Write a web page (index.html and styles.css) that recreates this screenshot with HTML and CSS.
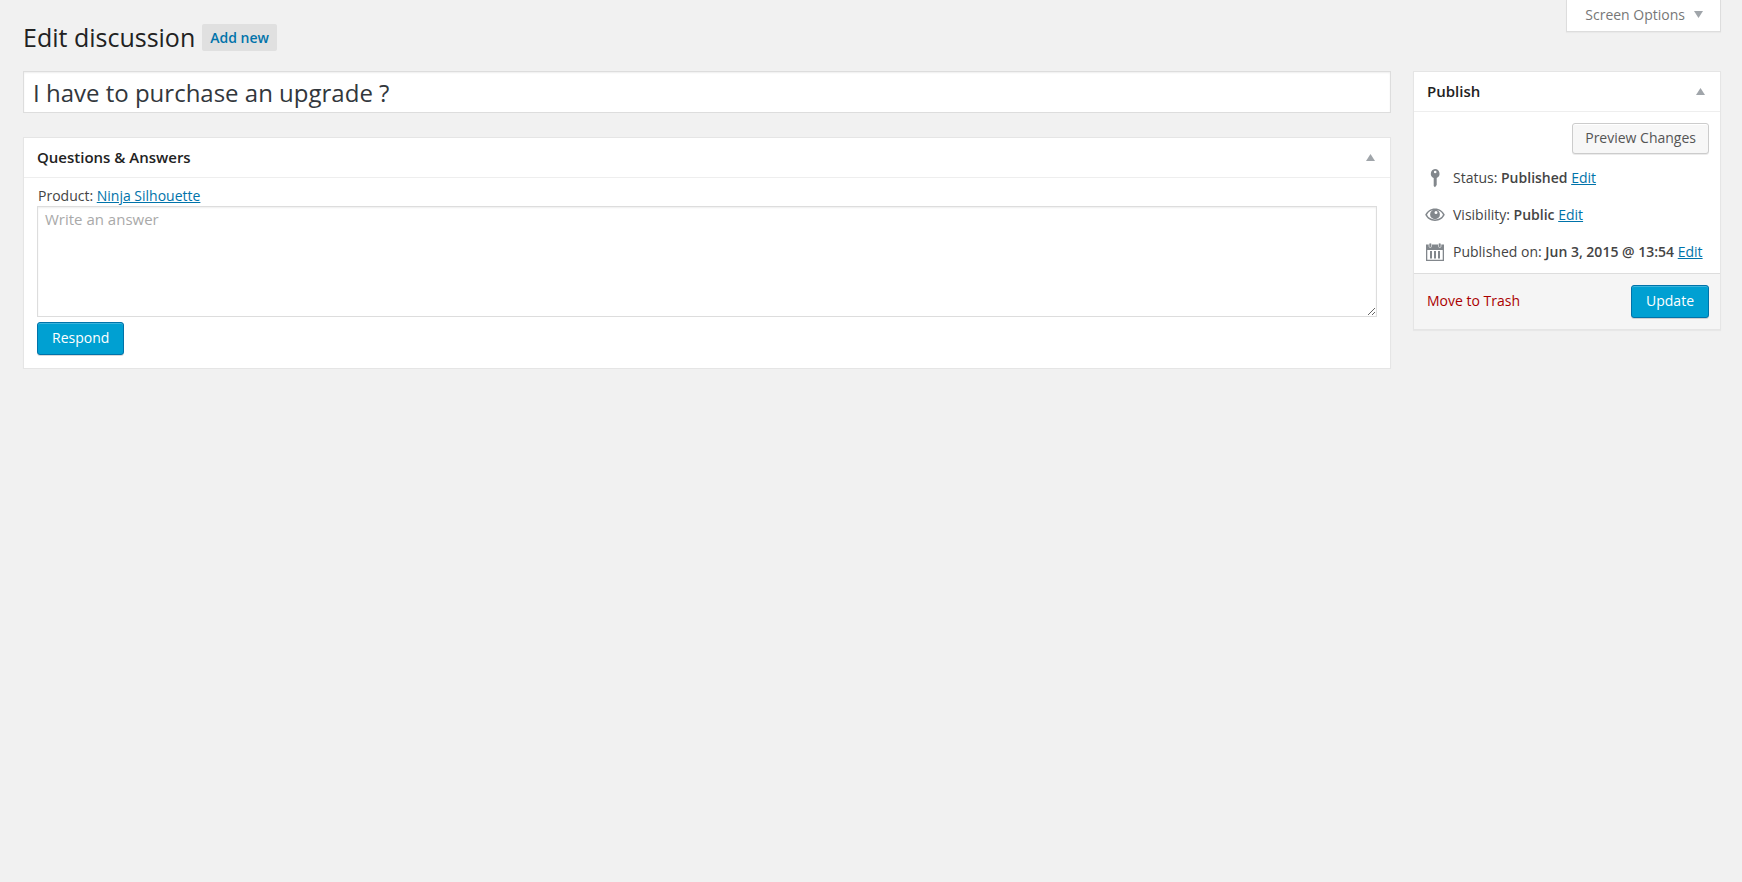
FILE: index.html
```html
<!DOCTYPE html>
<html lang="en">
<head>
  <meta charset="UTF-8" />
  <meta name="viewport" content="width=device-width, initial-scale=1.0" />
  <title>Edit discussion</title>
  <link rel="stylesheet" href="styles.css">
</head>
<body>
  <button type="button" class="screen-options">
    Screen Options
    <svg class="arrow" viewBox="0 0 9 7"><path d="M0 0h9L4.500 7z"/></svg>
  </button>

  <div class="wrap">
    <div class="page-title">
      <h1>Edit discussion</h1>
      <a href="#" class="add-new">Add new</a>
    </div>

    <form class="columns" onsubmit="return false">
      <main class="main-column">
        <input type="text" class="title-input" aria-label="Title" value="I have to purchase an upgrade ?">

        <section class="postbox">
          <div class="postbox-header">
            <h2>Questions &amp; Answers</h2>
            <button type="button" class="toggle" aria-label="Toggle Questions &amp; Answers">
              <svg class="arrow" viewBox="0 0 9 7"><path d="M4.500 0L9 7H0z"/></svg>
            </button>
          </div>
          <div class="answers">
            <label for="answer" class="product">Product: <a href="#">Ninja Silhouette</a></label>
            <textarea id="answer" placeholder="Write an answer"></textarea>
            <button type="button" class="button primary">Respond</button>
          </div>
        </section>
      </main>

      <aside class="side-column">
        <section class="postbox">
          <div class="postbox-header">
            <h2>Publish</h2>
            <button type="button" class="toggle" aria-label="Toggle Publish">
              <svg class="arrow" viewBox="0 0 9 7"><path d="M4.500 0L9 7H0z"/></svg>
            </button>
          </div>
          <div class="preview-row">
            <button type="button" class="button">Preview Changes</button>
          </div>
          <ul class="publish-info">
            <li>
              <svg class="icon" viewBox="0 0 20 20">
                <path fill-rule="evenodd" d="M10 1a4.700 4.700 0 0 1 1.700 9V17l-1.700 2.300L8.700 18v-8A4.700 4.700 0 0 1 10 1zM10.200 2.700a1.300 1.300 0 1 0 0 2.600 1.300 1.300 0 0 0 0-2.600z"/>
              </svg>
              <span>Status: <b>Published</b> <a href="#">Edit</a></span>
            </li>
            <li>
              <svg class="icon" viewBox="0 0 20 20">
                <path fill-rule="evenodd" d="M10 3.500c4.500 0 8 2.500 9.800 6.300C18 13.600 14.500 16 10 16S2 13.600.2 9.800C2 6 5.500 3.500 10 3.500zM10 5C6 5 3.300 7 2 9.800c1.300 2.800 4 4.600 8 4.600s6.700-1.800 8-4.600C16.700 7 14 5 10 5z"/>
                <path fill-rule="evenodd" d="M10 4.500a4.900 4.900 0 1 1 0 9.800 4.900 4.900 0 0 1 0-9.800zM11 6a1.500 1.500 0 1 0 0 3 1.500 1.500 0 0 0 0-3z"/>
              </svg>
              <span>Visibility: <b>Public</b> <a href="#">Edit</a></span>
            </li>
            <li>
              <svg class="icon" viewBox="0 0 20 20">
                <path fill-rule="evenodd" d="M1 2.500h18V19H1zM2.300 8v9.700h15.400V8z"/>
                <path d="M5 9h2v7.500H5zM9 9h2v7.500H9zM13 9h2v7.500h-2z"/>
                <rect class="ring" x="4" y="1" width="2.500" height="4.500" rx="1.200"/>
                <rect class="ring" x="13.500" y="1" width="2.500" height="4.500" rx="1.200"/>
              </svg>
              <span>Published on: <b>Jun 3, 2015 @ 13:54</b> <a href="#">Edit</a></span>
            </li>
          </ul>
          <div class="publish-actions">
            <a href="#" class="trash">Move to Trash</a>
            <button type="submit" class="button primary">Update</button>
          </div>
        </section>
      </aside>
    </form>
  </div>
</body>
</html>
```

FILE: styles.css
```css
* {
  box-sizing: border-box;
}
body {
  margin: 0;
  padding: 0 21px 0 23px;
  background: #f1f1f1;
  color: #444;
  font-family: "Open Sans", sans-serif;
  font-size: 14px;
  line-height: 20px;
}
h1, h2 {
  margin: 0;
  color: #222;
}
a {
  color: #0073aa;
}
button, input, textarea {
  font-family: inherit;
  font-size: 14px;
}
button {
  cursor: pointer;
}
.arrow {
  width: 9px;
  height: 7px;
  fill: #a0a5aa;
}
.screen-options {
  float: right;
  display: flex;
  align-items: center;
  gap: 9px;
  height: 32px;
  padding: 0 17px 2px 18px;
  background: #fff;
  border: 1px solid #ddd;
  border-top: none;
  box-shadow: 0 1px 1px rgba(0, 0, 0, 0.03);
  color: #777;
}
.page-title {
  display: flex;
  align-items: center;
  gap: 7px;
  padding: 20px 0 16px;
}
.page-title h1 {
  font-size: 25px;
  font-weight: 400;
  line-height: 35px;
}
.add-new {
  padding: 4px 8px 3px;
  background: #e0e0e0;
  border-radius: 2px;
  font-weight: 600;
  text-decoration: none;
}
.columns {
  display: flex;
  align-items: flex-start;
  gap: 22px;
}
.main-column {
  flex: 1;
  min-width: 0;
}
.side-column {
  width: 308px;
}
.title-input {
  display: block;
  width: 100%;
  height: 42px;
  margin-bottom: 24px;
  padding: 2px 9px;
  border: 1px solid #ddd;
  box-shadow: inset 0 1px 2px rgba(0, 0, 0, 0.07);
  color: #32373c;
  font-size: 24px;
}
.postbox {
  background: #fff;
  border: 1px solid #e5e5e5;
  box-shadow: 0 1px 1px rgba(0, 0, 0, 0.04);
}
.postbox-header {
  display: flex;
  align-items: center;
  justify-content: space-between;
  height: 40px;
  padding: 0 7px 2px 13px;
  border-bottom: 1px solid #eee;
}
.postbox-header h2 {
  font-size: 15px;
  font-weight: 600;
}
.toggle {
  display: flex;
  padding: 9px 8px 7px;
  background: none;
  border: none;
}
.answers {
  padding: 8px 13px 13px;
}
.product {
  display: block;
  padding-left: 1px;
}
.answers textarea {
  display: block;
  width: 100%;
  height: 111px;
  margin-bottom: 5px;
  padding: 1px 7px;
  border: 1px solid #ddd;
  box-shadow: inset 0 1px 2px rgba(0, 0, 0, 0.07);
  color: #32373c;
  font-size: 15px;
  line-height: 22px;
}
.answers textarea::placeholder {
  color: #a9a9a9;
}
.button {
  height: 31px;
  padding: 0 12px 2px;
  background: #f7f7f7;
  border: 1px solid #ccc;
  border-radius: 3px;
  box-shadow: inset 0 1px 0 #fff, 0 1px 0 rgba(0, 0, 0, 0.08);
  color: #555;
}
.button.primary {
  height: 33px;
  padding: 0 14px 2px;
  background: #00a0d2;
  border-color: #0073aa;
  box-shadow: inset 0 1px 0 rgba(120, 200, 230, 0.5), 0 1px 0 rgba(0, 0, 0, 0.15);
  color: #fff;
}
.preview-row {
  display: flex;
  justify-content: flex-end;
  padding: 11px 11px 0;
}
.publish-info {
  margin: 0;
  padding: 5px 0 3px 11px;
  list-style: none;
}
.publish-info li {
  display: flex;
  align-items: center;
  gap: 8px;
  height: 37px;
  white-space: nowrap;
}
.publish-info b {
  font-weight: 600;
}
.icon {
  width: 20px;
  height: 20px;
  fill: #82878c;
}
.ring {
  stroke: #fff;
  stroke-width: 0.6;
}
.publish-actions {
  display: flex;
  align-items: center;
  justify-content: space-between;
  padding: 11px 11px 11px 13px;
  background: #f5f5f5;
  border-top: 1px solid #ddd;
}
.trash {
  padding-bottom: 2px;
  color: #a00;
  text-decoration: none;
}
```
